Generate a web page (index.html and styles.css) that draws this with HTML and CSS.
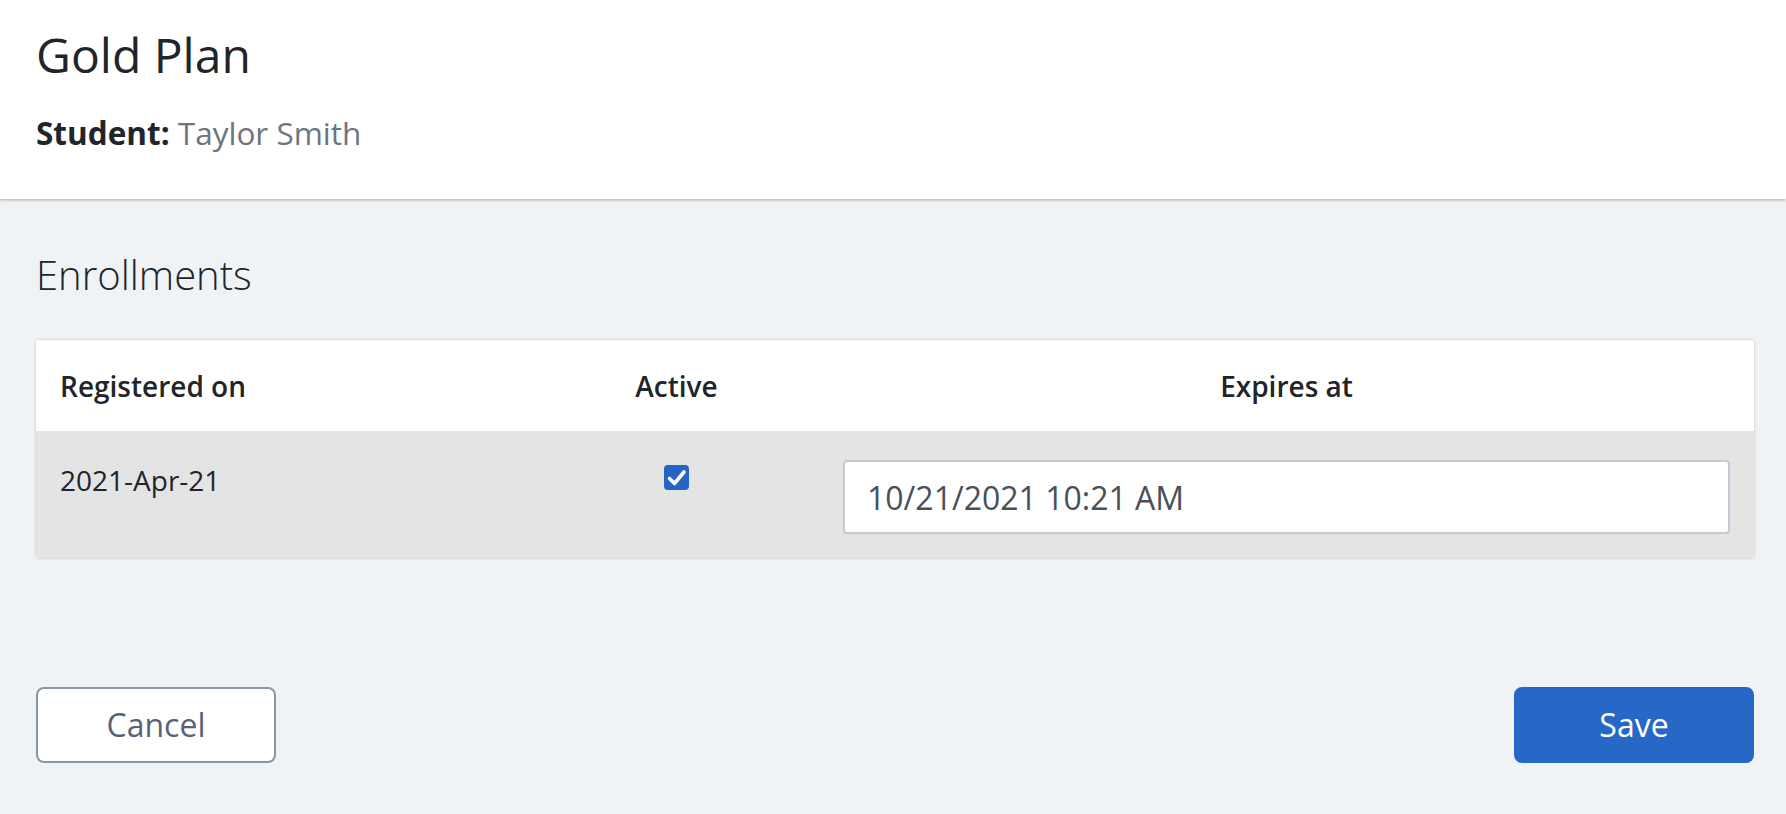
FILE: index.html
```html
<!DOCTYPE html>
<html lang="en">
<head>
<meta charset="utf-8">
<title>Gold Plan</title>
<link rel="stylesheet" href="styles.css">
</head>
<body>
<header class="page-header">
  <h1 class="plan-title">Gold Plan</h1>
  <p class="student"><strong class="student-label">Student:</strong> <span class="student-name">Taylor Smith</span></p>
</header>
<main class="content">
  <h2 class="section-title">Enrollments</h2>
  <div class="card">
    <table class="enroll-table">
      <colgroup>
        <col class="col-registered">
        <col class="col-active">
        <col class="col-expires">
      </colgroup>
      <thead>
        <tr class="head-row">
          <th class="cell cell-left">Registered on</th>
          <th class="cell cell-center">Active</th>
          <th class="cell cell-center">Expires at</th>
        </tr>
      </thead>
      <tbody>
        <tr class="body-row">
          <td class="cell cell-left">2021-Apr-21</td>
          <td class="cell cell-center">
            <span class="checkbox" role="checkbox" aria-checked="true">
              <svg class="check-icon" viewBox="0 0 25 25" width="25" height="25"><path d="M5.5 13.5 L10.5 18.5 L20 7" fill="none" stroke="#fff" stroke-width="3.6" stroke-linecap="round" stroke-linejoin="round"/></svg>
            </span>
          </td>
          <td class="cell cell-input">
            <input class="date-input" type="text" value="10/21/2021 10:21 AM">
          </td>
        </tr>
      </tbody>
    </table>
  </div>
  <div class="actions">
    <button class="btn btn-cancel" type="button">Cancel</button>
    <button class="btn btn-save" type="button">Save</button>
  </div>
</main>
</body>
</html>
```

FILE: styles.css
```css
* {
  box-sizing: border-box;
}

html, body {
  margin: 0;
  padding: 0;
}

body {
  background: #eff3f6;
  font-family: "Open Sans", "Noto Sans", sans-serif;
  color: #212529;
  min-height: 814px;
}

.page-header {
  background: #ffffff;
  padding: 25px 36px 42px 36px;
  box-shadow: 0 1px 3px rgba(0, 0, 0, 0.28);
  position: relative;
}

.plan-title {
  margin: 0;
  font-size: 48px;
  line-height: 60px;
  font-weight: 400;
  color: #212529;
}

.student {
  margin: 24px 0 0 0;
  font-size: 31.5px;
  line-height: 48px;
}

.student-label {
  font-weight: 700;
  color: #212529;
}

.student-name {
  color: #6c757d;
}

.content {
  padding: 52px 32px 0 36px;
}

.section-title {
  margin: 0;
  font-size: 40px;
  line-height: 48px;
  font-weight: 300;
  color: #212529;
}

.card {
  margin-top: 41px;
  background: #ffffff;
  box-shadow: 0 0 3px rgba(0, 0, 0, 0.22);
  border-radius: 3px;
  overflow: hidden;
}

.enroll-table {
  width: 100%;
  border-collapse: collapse;
  table-layout: fixed;
}

.col-registered {
  width: 498px;
}

.col-active {
  width: 285px;
}

.cell {
  font-size: 28px;
  line-height: 42px;
  padding: 0 24px;
  vertical-align: top;
}

.cell-left {
  text-align: left;
}

.cell-center {
  text-align: center;
}

.head-row .cell {
  font-weight: 600;
  color: #212529;
  padding-top: 25px;
  padding-bottom: 24px;
  background: #ffffff;
}

.body-row .cell {
  background: #e4e4e5;
  color: #212529;
  padding-top: 28px;
  padding-bottom: 24px;
}

.body-row .cell-input {
  padding-top: 29px;
}

.checkbox {
  display: inline-flex;
  width: 25px;
  height: 25px;
  margin-top: 6px;
  background: #2563c4;
  border-radius: 4px;
  vertical-align: top;
}

.check-icon {
  display: block;
}

.date-input {
  display: block;
  width: 100%;
  height: 74px;
  margin: 0;
  border: 2px solid #c4c9d5;
  border-radius: 4px;
  background: #ffffff;
  padding: 0 22px;
  font-family: "Open Sans", "Noto Sans", sans-serif;
  font-size: 32px;
  color: #495057;
  outline: none;
}

.actions {
  margin-top: 129px;
  display: flex;
  justify-content: space-between;
}

.btn {
  width: 240px;
  height: 76px;
  border-radius: 8px;
  font-family: "Open Sans", "Noto Sans", sans-serif;
  font-size: 32px;
  line-height: 1;
  cursor: pointer;
  padding: 0;
}

.btn-cancel {
  background: #ffffff;
  border: 2px solid #8b97a8;
  color: #56627a;
}

.btn-save {
  background: #2767c5;
  border: 2px solid #2767c5;
  color: #ffffff;
}
```
